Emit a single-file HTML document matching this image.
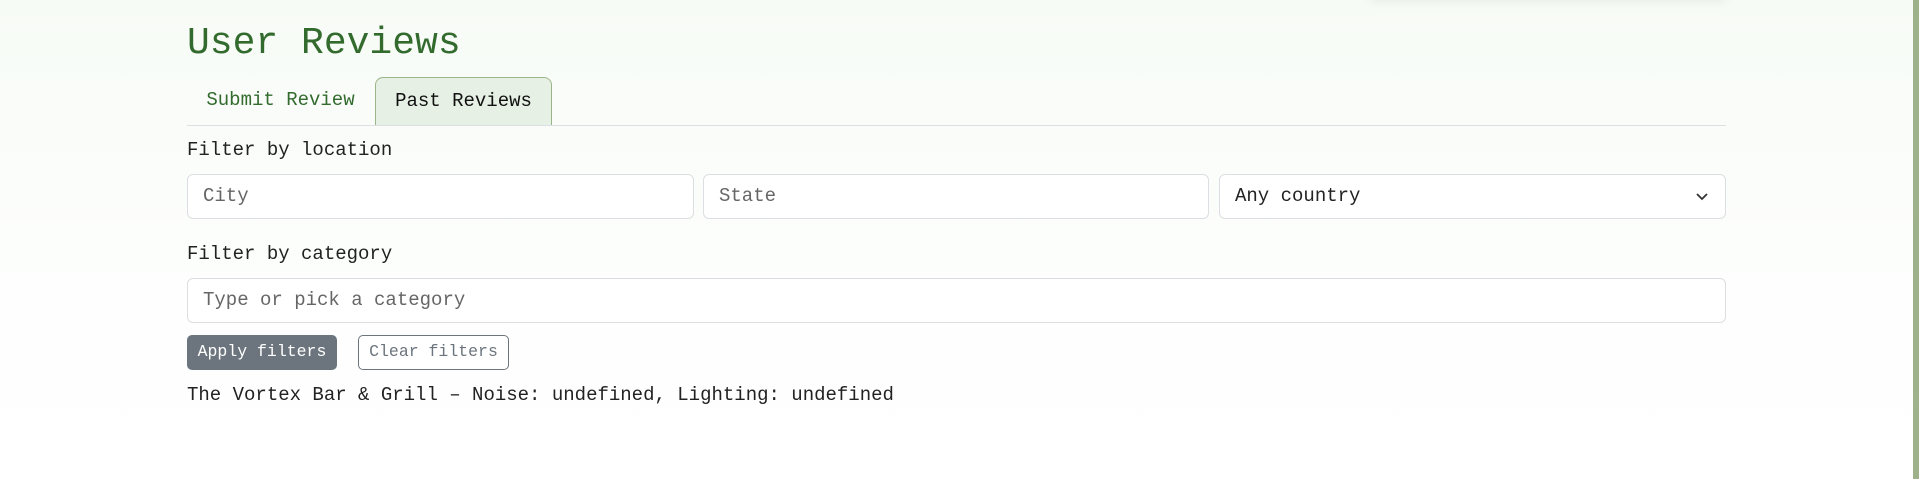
<!DOCTYPE html>
<html><head><meta charset="utf-8"><style>
html,body{margin:0;padding:0}
body{width:1919px;height:479px;overflow:hidden;background:linear-gradient(#f7fbf6,#fdfefd 60%,#fff);font-family:"Liberation Mono",monospace;position:relative;color:#222}
.strip{position:absolute;right:0;top:0;width:6px;height:479px;background:#9db28a}
.shadow{position:absolute;left:1370px;top:-20px;width:356px;height:20px;box-shadow:0 2px 10px rgba(0,0,0,.06)}
.abs{position:absolute;white-space:nowrap}
h1{position:absolute;left:187px;top:20px;margin:0;font-weight:normal;font-size:38px;color:#336b2e;line-height:48px}
.line{position:absolute;left:187px;top:125px;width:1539px;height:1px;background:#dcdfe3}
.tab{position:absolute;top:77px;height:48px;line-height:46px;font-size:19px;box-sizing:border-box}
.t1{left:188px;width:185px;color:#336b2e;text-align:center}
.t2{left:375px;width:177px;background:#e6f0e4;border:1px solid #9bb58a;border-bottom:none;border-radius:8px 8px 0 0;text-align:center;color:#111;height:49px}
.lbl{font-size:19px;color:#222}
.in{position:absolute;height:45px;box-sizing:border-box;border:1px solid #dcdee2;border-radius:6px;background:#fff;font-size:19px;line-height:43px;padding-left:15px;color:#666}
.btn{position:absolute;top:335px;height:35px;box-sizing:border-box;border-radius:5px;font-size:16.5px;line-height:32px;text-align:center}
</style></head><body>
<div class="shadow"></div>
<div class="strip"></div>
<h1>User Reviews</h1>
<div class="tab t1">Submit Review</div>
<div class="tab t2">Past Reviews</div>
<div class="line"></div>
<div class="abs lbl" style="left:187px;top:139px">Filter by location</div>
<div class="in" style="left:187px;top:174px;width:507px">City</div>
<div class="in" style="left:703px;top:174px;width:506px">State</div>
<div class="in" style="left:1219px;top:174px;width:507px;color:#222">Any country
<svg style="position:absolute;right:16px;top:17px" width="14" height="10" viewBox="0 0 14 10"><path d="M2 2l5 5 5-5" fill="none" stroke="#333" stroke-width="1.8"/></svg></div>
<div class="abs lbl" style="left:187px;top:243px">Filter by category</div>
<div class="in" style="left:187px;top:278px;width:1539px">Type or pick a category</div>
<div class="btn" style="left:187px;width:150px;background:#6c757d;color:#fff;border:1px solid #6c757d">Apply filters</div>
<div class="btn" style="left:358px;width:151px;background:#fff;color:#6c757d;border:1px solid #6c757d">Clear filters</div>
<div class="abs lbl" style="left:187px;top:384px">The Vortex Bar &amp; Grill – Noise: undefined, Lighting: undefined</div>
</body></html>
